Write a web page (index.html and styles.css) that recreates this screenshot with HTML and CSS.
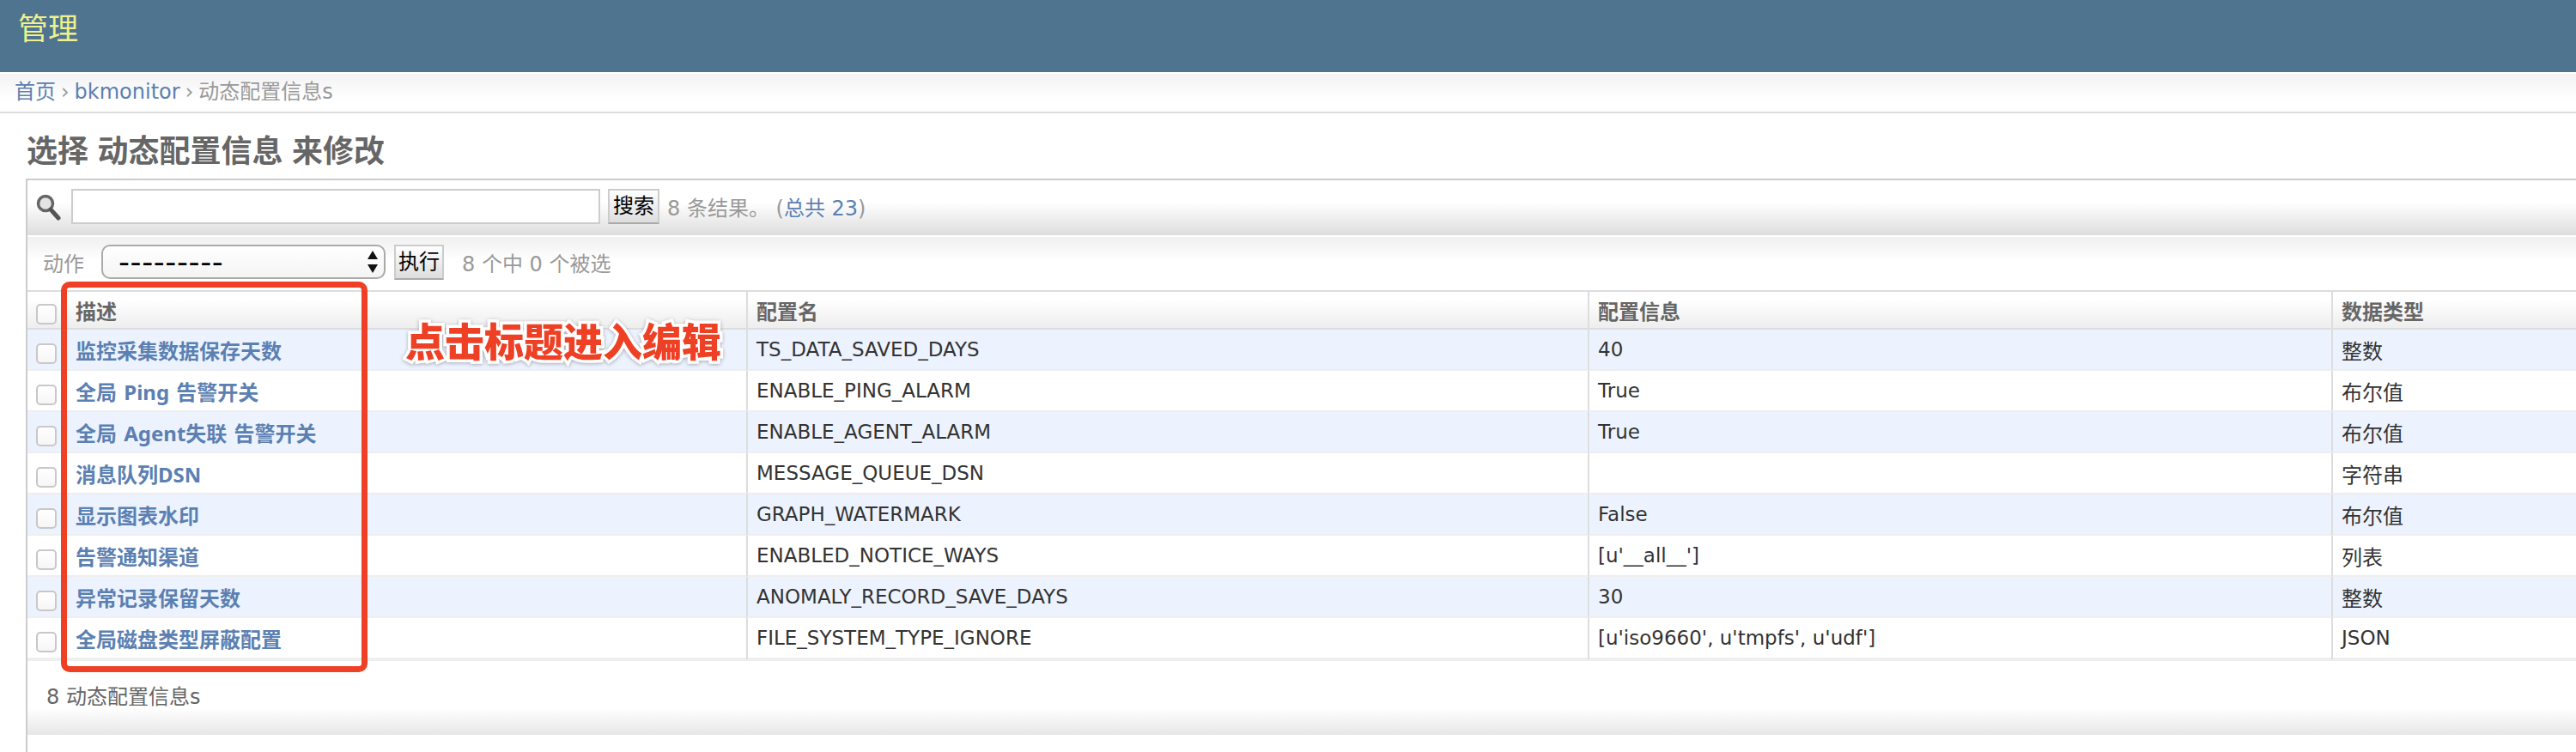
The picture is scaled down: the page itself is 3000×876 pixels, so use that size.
FILE: index.html
```html
<!DOCTYPE html>
<html lang="zh-CN">
<head>
    <meta charset="UTF-8">
    <title>选择 动态配置信息 来修改</title>
    <link rel="stylesheet" href="styles.css">
</head>
<body>

<header class="site-header">管理</header>

<nav class="breadcrumbs">
    <a href="#">首页</a><span class="sep">›</span><a href="#">bkmonitor</a><span class="sep">›</span>动态配置信息s
</nav>

<h1 class="page-title">选择 动态配置信息 来修改</h1>

<div class="changelist">
    <div class="toolbar">
        <svg class="search-icon" width="30" height="32" viewBox="0 0 30 32">
            <circle cx="11" cy="11" r="8.5" fill="#e4e4e4" stroke="#666" stroke-width="3.5"/>
            <path d="M17 18 L26 28" stroke="#555" stroke-width="5" stroke-linecap="round"/>
        </svg>
        <input type="text" class="search-input">
        <button class="btn">搜索</button>
        <span class="quiet result-count">8 条结果。 (<a href="#">总共 23</a>)</span>
    </div>

    <div class="actions">
        <span class="quiet action-label">动作</span>
        <div class="fake-select">
            <span class="dashes">---------</span>
            <svg width="14" height="30" viewBox="0 0 14 30">
                <path d="M7 2 L13 12 H1 Z M7 28 L13 18 H1 Z" fill="#111"/>
            </svg>
        </div>
        <button class="btn btn-run">执行</button>
        <span class="quiet selected-count">8 个中 0 个被选</span>
    </div>

    <table class="result-list">
        <colgroup>
            <col class="col-check">
            <col class="col-desc">
            <col class="col-name">
            <col class="col-info">
            <col>
        </colgroup>
        <thead>
            <tr>
                <th><span class="check"></span></th>
                <th class="first">描述</th>
                <th>配置名</th>
                <th>配置信息</th>
                <th>数据类型</th>
            </tr>
        </thead>
        <tbody>
            <tr>
                <td><span class="check"></span></td>
                <td class="first"><a href="#">监控采集数据保存天数</a></td>
                <td>TS_DATA_SAVED_DAYS</td>
                <td>40</td>
                <td class="type">整数</td>
            </tr>
            <tr>
                <td><span class="check"></span></td>
                <td class="first"><a href="#">全局 Ping 告警开关</a></td>
                <td>ENABLE_PING_ALARM</td>
                <td>True</td>
                <td class="type">布尔值</td>
            </tr>
            <tr>
                <td><span class="check"></span></td>
                <td class="first"><a href="#">全局 Agent失联 告警开关</a></td>
                <td>ENABLE_AGENT_ALARM</td>
                <td>True</td>
                <td class="type">布尔值</td>
            </tr>
            <tr>
                <td><span class="check"></span></td>
                <td class="first"><a href="#">消息队列DSN</a></td>
                <td>MESSAGE_QUEUE_DSN</td>
                <td></td>
                <td class="type">字符串</td>
            </tr>
            <tr>
                <td><span class="check"></span></td>
                <td class="first"><a href="#">显示图表水印</a></td>
                <td>GRAPH_WATERMARK</td>
                <td>False</td>
                <td class="type">布尔值</td>
            </tr>
            <tr>
                <td><span class="check"></span></td>
                <td class="first"><a href="#">告警通知渠道</a></td>
                <td>ENABLED_NOTICE_WAYS</td>
                <td>[u'__all__']</td>
                <td class="type">列表</td>
            </tr>
            <tr>
                <td><span class="check"></span></td>
                <td class="first"><a href="#">异常记录保留天数</a></td>
                <td>ANOMALY_RECORD_SAVE_DAYS</td>
                <td>30</td>
                <td class="type">整数</td>
            </tr>
            <tr>
                <td><span class="check"></span></td>
                <td class="first"><a href="#">全局磁盘类型屏蔽配置</a></td>
                <td>FILE_SYSTEM_TYPE_IGNORE</td>
                <td>[u'iso9660', u'tmpfs', u'udf']</td>
                <td>JSON</td>
            </tr>
        </tbody>
    </table>

    <div class="paginator">8 动态配置信息s</div>
</div>

<!-- annotation drawn over the screenshot -->
<div class="mark-box"></div>
<div class="mark-text">点击标题进入编辑</div>

</body>
</html>
```

FILE: styles.css
```css
* {
    box-sizing: border-box;
}

html, body {
    margin: 0;
    padding: 0;
}

body {
    position: relative;
    height: 876px;
    overflow: hidden;
    background: #fff;
    font-family: "DejaVu Sans", "Noto Sans CJK SC", sans-serif;
    font-size: 23px;
    color: #333;
}

a {
    color: #5b80b2;
    text-decoration: none;
}

.site-header {
    height: 84px;
    padding: 11px 0 0 21px;
    background: #4e7490;
    color: #f0f08c;
    font-size: 35px;
    line-height: 46px;
}

.breadcrumbs {
    height: 46px;
    margin-top: 2px;
    padding-left: 17px;
    border-bottom: 2px solid #ddd;
    background: linear-gradient(to bottom, #f3f3f3, #fff 70%);
    color: #999;
    font-size: 24px;
    line-height: 42px;
}

.breadcrumbs .sep {
    margin: 0 6px;
}

.page-title {
    height: 76px;
    margin: 0;
    padding: 22px 0 0 31px;
    color: #666;
    font-size: 36px;
    line-height: 46px;
    font-weight: bold;
    word-spacing: -2px;
}

.changelist {
    height: 668px;
    margin-left: 30px;
    border-top: 2px solid #ccc;
    border-left: 2px solid #ccc;
}

.toolbar {
    display: flex;
    align-items: center;
    height: 64px;
    padding: 0 0 4px 10px;
    background: linear-gradient(to bottom, #fff 40%, #ddd);
}

.search-icon {
    flex: none;
    margin: 4px 11px 0 0;
}

.search-input {
    width: 616px;
    height: 41px;
    margin-right: 9px;
    border: 2px solid #ccc;
    background: #fff;
}

.btn {
    height: 41px;
    width: 60px;
    padding: 0;
    border: 2px solid #ccc;
    border-bottom-color: #aaa;
    background: linear-gradient(to bottom, #fff, #ddd);
    color: #000;
    font-family: inherit;
    font-size: 24px;
    line-height: 36px;
}

.quiet {
    color: #999;
}

.result-count {
    margin-left: 9px;
    font-size: 24px;
}

.actions {
    display: flex;
    align-items: center;
    height: 64px;
    margin-top: 2px;
    padding: 0 0 4px 18px;
    border-bottom: 2px solid #ddd;
    background: linear-gradient(to bottom, #f0f0f0, #fff 45%);
}

.action-label {
    width: 68px;
    font-size: 24px;
}

.fake-select {
    display: flex;
    align-items: center;
    justify-content: space-between;
    width: 331px;
    height: 40px;
    padding: 0 6px 0 18px;
    border: 2px solid #aaa;
    border-radius: 10px;
    background: linear-gradient(to bottom, #fff, #f4f4f4);
}

.dashes {
    color: #000;
    font-size: 36px;
    line-height: 36px;
    letter-spacing: 0.6px;
}

.btn-run {
    width: 58px;
    margin-left: 10px;
}

.selected-count {
    margin-left: 21px;
    font-size: 24px;
}

.result-list {
    width: 2968px;
    border-collapse: separate;
    border-spacing: 0;
    table-layout: fixed;
}

.col-check {
    width: 46px;
}

.col-desc {
    width: 791px;
}

.col-name {
    width: 980px;
}

.col-info {
    width: 866px;
}

.result-list th,
.result-list td {
    height: 48px;
    padding: 0 0 0 10px;
    border-left: 2px solid #ddd;
    text-align: left;
    white-space: nowrap;
    font-size: 23px;
}

.result-list th:first-child,
.result-list td:first-child {
    border-left: none;
}

.result-list .first {
    border-left: none;
    padding-left: 10px;
}

.result-list th {
    height: 44px;
    border-bottom: 2px solid #ddd;
    background: linear-gradient(to bottom, #fff 20%, #eee);
    color: #666;
    font-size: 24px;
    font-weight: bold;
}

.result-list td {
    border-bottom: 2px solid #eee;
}

.result-list td.type {
    font-size: 24px;
}

.result-list tbody tr:nth-child(odd) td {
    background: #edf3fe;
}

.result-list tbody tr:last-child td {
    height: 50px;
    border-bottom-width: 4px;
}

.result-list td.first {
    font-family: "Noto Sans", "Noto Sans CJK SC", sans-serif;
    font-size: 24px;
    font-weight: bold;
    word-spacing: 2px;
}

.check {
    display: block;
    width: 24px;
    height: 24px;
    margin-top: 10px;
    border: 2px solid #c8c8c8;
    border-radius: 5px;
    background: linear-gradient(to bottom, #fff, #f6f6f6);
}

.paginator {
    height: 86px;
    padding: 26px 0 0 22px;
    background: linear-gradient(to bottom, #fff 64%, #e6e6e6);
    color: #666;
    font-size: 24px;
    line-height: 32px;
}

.mark-box {
    position: absolute;
    left: 71px;
    top: 328px;
    width: 357px;
    height: 455px;
    border: 7px solid #ee4024;
    border-radius: 10px;
}

.mark-text {
    position: absolute;
    left: 472px;
    top: 366px;
    color: #ee4024;
    font-family: "Noto Sans CJK SC", sans-serif;
    font-size: 46px;
    line-height: 58px;
    font-weight: 900;
    -webkit-text-stroke: 7px #fff;
    paint-order: stroke fill;
    filter: drop-shadow(0 1px 2px rgba(0, 0, 0, 0.3));
}
```
